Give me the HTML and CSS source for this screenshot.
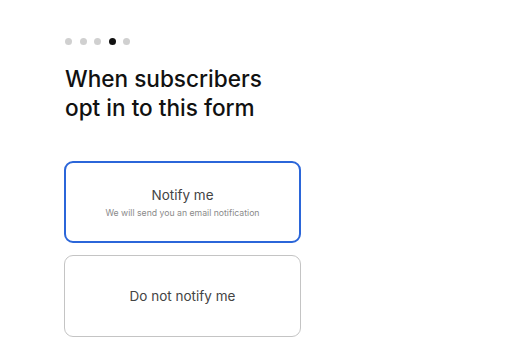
FILE: index.html
```html
<!DOCTYPE html>
<html lang="en">
<head>
<meta charset="utf-8">
<title>Opt-in</title>
<link rel="stylesheet" href="styles.css">
</head>
<body>
<main class="page">
  <div class="dots">
    <span class="dot"></span>
    <span class="dot"></span>
    <span class="dot"></span>
    <span class="dot active"></span>
    <span class="dot"></span>
  </div>
  <h1 class="title">When subscribers<br>opt in to this form</h1>
  <div class="options">
    <button class="option selected">
      <span class="option-label">Notify me</span>
      <span class="option-desc">We will send you an email notification</span>
    </button>
    <button class="option">
      <span class="option-label">Do not notify me</span>
    </button>
  </div>
</main>
</body>
</html>
```

FILE: styles.css
```css
html, body {
  margin: 0;
  padding: 0;
  background: #ffffff;
}
body {
  font-family: Inter, "Liberation Sans", sans-serif;
  color: #111;
}
.page {
  padding: 38px 0 0 65px;
}
.dots {
  display: flex;
  gap: 7.5px;
}
.dot {
  width: 7px;
  height: 7px;
  border-radius: 50%;
  background: #d0d0d0;
}
.dot.active {
  background: #111;
}
.title {
  margin: 19px 0 0 0;
  font-size: 22.6px;
  line-height: 29px;
  font-weight: 450;
  color: #111;
  letter-spacing: 0;
}
.options {
  margin-top: 39px;
  margin-left: -1px;
  display: flex;
  flex-direction: column;
  gap: 12px;
  width: 237px;
}
.option {
  box-sizing: border-box;
  height: 82px;
  width: 100%;
  background: #fff;
  border: 1px solid #c4c4c4;
  border-radius: 9px;
  display: flex;
  flex-direction: column;
  align-items: center;
  justify-content: center;
  gap: 5px;
  font-family: inherit;
  padding: 0;
}
.option.selected {
  border: 2px solid #2b66d9;
  padding-top: 0;
}
.option-label {
  font-size: 13.5px;
  color: #444;
  font-weight: 400;
}
.option-desc {
  font-size: 8.7px;
  color: #8a8a8a;
}
```
